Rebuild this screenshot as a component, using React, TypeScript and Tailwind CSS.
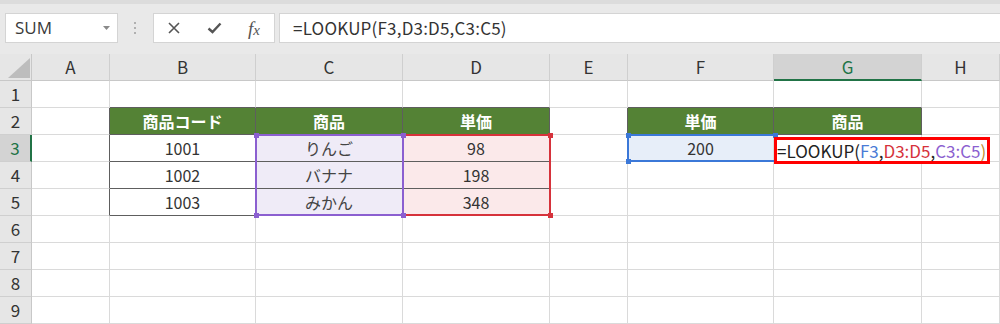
import React from "react";

const COLS = ["A", "B", "C", "D", "E", "F", "G", "H"];
const GRID = "#dadada";
const DARK = "#5e5e5e";
const CELLFONT = { fontFamily: '"Noto Sans CJK JP", "Noto Sans", sans-serif' };

type Cell = { text?: string; kind?: "head" | "c" | "d" | "f" | "plain" };

const data: Record<string, Cell> = {
  B2: { text: "商品コード", kind: "head" },
  C2: { text: "商品", kind: "head" },
  D2: { text: "単価", kind: "head" },
  F2: { text: "単価", kind: "head" },
  G2: { text: "商品", kind: "head" },
  B3: { text: "1001", kind: "plain" },
  B4: { text: "1002", kind: "plain" },
  B5: { text: "1003", kind: "plain" },
  C3: { text: "りんご", kind: "c" },
  C4: { text: "バナナ", kind: "c" },
  C5: { text: "みかん", kind: "c" },
  D3: { text: "98", kind: "d" },
  D4: { text: "198", kind: "d" },
  D5: { text: "348", kind: "d" },
  F3: { text: "200", kind: "f" },
};

function inTable(r: number, c: number) {
  if (r >= 2 && r <= 5 && c >= 1 && c <= 3) return true;
  if (r === 2 && (c === 5 || c === 6)) return true;
  return false;
}

function borders(r: number, c: number) {
  const right = inTable(r, c) || inTable(r, c + 1) ? DARK : GRID;
  const bottom = inTable(r, c) || inTable(r + 1, c) ? DARK : GRID;
  return { borderRightColor: right, borderBottomColor: bottom };
}

function Handle({ x, y, color }: { x: number; y: number; color: string }) {
  return (
    <div
      className="absolute w-[5px] h-[5px]"
      style={{ left: x - 2, top: y - 2, backgroundColor: color }}
    />
  );
}

export default function App() {
  const rows = [1, 2, 3, 4, 5, 6, 7, 8, 9];
  return (
    <div className="w-[1000px] h-[324px] overflow-hidden bg-white relative">
      {/* toolbar */}
      <div className="h-[54px] bg-[#e9e9e9] relative">
        <div className="h-[4px] bg-[#dcdcdc]" />
        <div className="flex items-center pt-[9px]">
          <div className="ml-[5px] w-[113px] h-[30px] bg-white border border-[#d4d4d4] flex items-center justify-between pl-[9px] pr-[7px]">
            <span className="text-[17px] text-[#3a3a3a]" style={{ fontFamily: '"Open Sans", "Noto Sans", sans-serif' }}>
              SUM
            </span>
            <svg width="7" height="4" viewBox="0 0 7 4">
              <path d="M0 0 L7 0 L3.5 4 Z" fill="#8a8a8a" />
            </svg>
          </div>
          <div className="w-[35px] flex justify-center">
            <svg width="3" height="12" viewBox="0 0 3 12">
              <rect x="0" y="0" width="2" height="2" fill="#b0b0b0" />
              <rect x="0" y="5" width="2" height="2" fill="#b0b0b0" />
              <rect x="0" y="10" width="2" height="2" fill="#b0b0b0" />
            </svg>
          </div>
          <div className="w-[122px] h-[30px] bg-white border border-[#d4d4d4] flex items-center">
            <div className="w-[40px] flex justify-center">
              <svg width="12" height="12" viewBox="0 0 12 12">
                <path d="M1 1 L11 11 M11 1 L1 11" stroke="#555" strokeWidth="1.6" />
              </svg>
            </div>
            <div className="w-[40px] flex justify-center">
              <svg width="15" height="12" viewBox="0 0 15 12">
                <path d="M1.5 6.5 L5.5 10 L13.5 1.5" stroke="#555" strokeWidth="2.4" fill="none" />
              </svg>
            </div>
            <div className="w-[40px] flex justify-center">
              <span className="text-[19px] italic text-[#555] leading-none" style={{ fontFamily: '"Liberation Serif", serif' }}>
                f<span className="text-[15px]">x</span>
              </span>
            </div>
          </div>
          <div className="ml-[4px] flex-1 h-[30px] bg-white border-l border-t border-b border-[#d4d4d4] flex items-center pl-[13px]">
            <span className="text-[17px] text-[#333] tracking-[0.2px]" style={CELLFONT}>
              =LOOKUP(F3,D3:D5,C3:C5)
            </span>
          </div>
        </div>
      </div>

      {/* grid */}
      <div className="relative" style={CELLFONT}>
        <div className="grid grid-cols-[32px_78px_146px_147px_147px_78px_146px_148px_78px] auto-rows-[27px]">
          <div className="bg-[#e6e6e6] border-r border-b border-[#c8c8c8] relative">
            <svg className="absolute left-[8px] top-[4px]" width="22" height="20" viewBox="0 0 22 20">
              <path d="M22 0 L22 20 L0 20 Z" fill="#bdbdbd" />
            </svg>
          </div>
          {COLS.map((c) => (
            <div
              key={c}
              className={
                "flex items-center justify-center text-[17px] border-r border-[#cfcfcf] " +
                (c === "G"
                  ? "bg-[#d3d3d3] text-[#217346] border-b-2 border-b-[#217346]"
                  : "bg-[#e6e6e6] text-[#333] border-b border-b-[#c8c8c8]")
              }
            >
              {c}
            </div>
          ))}
          {rows.map((r) => (
            <React.Fragment key={r}>
              <div
                className={
                  "flex items-center justify-center text-[17px] border-b border-[#cfcfcf] " +
                  (r === 3
                    ? "bg-[#d3d3d3] text-[#217346] border-r-2 border-r-[#217346]"
                    : "bg-[#e6e6e6] text-[#333] border-r border-r-[#c8c8c8]")
                }
              >
                {r}
              </div>
              {COLS.map((c, ci) => {
                const cell = data[c + r];
                let cls = "bg-white text-[#333]";
                if (cell?.kind === "head") cls = "bg-[#548235] text-white font-semibold";
                if (cell?.kind === "c") cls = "bg-[#efebf7] text-[#444]";
                if (cell?.kind === "d") cls = "bg-[#fbe9ea] text-[#333]";
                if (cell?.kind === "f") cls = "bg-[#e7eef9] text-[#333]";
                return (
                  <div
                    key={c}
                    className={"flex items-center justify-center text-[16px] border-r border-b " + cls}
                    style={borders(r, ci)}
                  >
                    {cell?.text}
                  </div>
                );
              })}
            </React.Fragment>
          ))}
        </div>

        {/* range highlights */}
        <div className="absolute left-[402px] top-[80px] w-[149px] h-[82px] border-2 border-[#d6323b]" />
        <div className="absolute left-[255px] top-[80px] w-[149px] h-[82px] border-2 border-[#8b5fd0]" />
        <div className="absolute left-[627px] top-[80px] w-[149px] h-[28px] border-2 border-[#3b78d8]" />
        <Handle x={256} y={81} color="#8b5fd0" />
        <Handle x={403} y={81} color="#8b5fd0" />
        <Handle x={256} y={161} color="#8b5fd0" />
        <Handle x={403} y={161} color="#8b5fd0" />
        <Handle x={550} y={81} color="#d6323b" />
        <Handle x={550} y={161} color="#d6323b" />
        <Handle x={628} y={81} color="#3b78d8" />
        <Handle x={628} y={107} color="#3b78d8" />
        <Handle x={775} y={81} color="#3b78d8" />

        {/* formula in G3 with red box */}
        <div className="absolute left-[774px] top-[83px] w-[216px] h-[27px] border-[3px] border-[#ff0000] bg-white flex items-center">
          <span className="text-[17px] whitespace-nowrap text-[#222] tracking-[0px]">
            =LOOKUP(<span className="text-[#4a7bd6]">F3</span>,<span className="text-[#d6323b]">D3:D5</span>,<span className="text-[#8b5fd0]">C3:C5</span><span className="text-[#c08a2a]">)</span>
          </span>
        </div>
      </div>
    </div>
  );
}
